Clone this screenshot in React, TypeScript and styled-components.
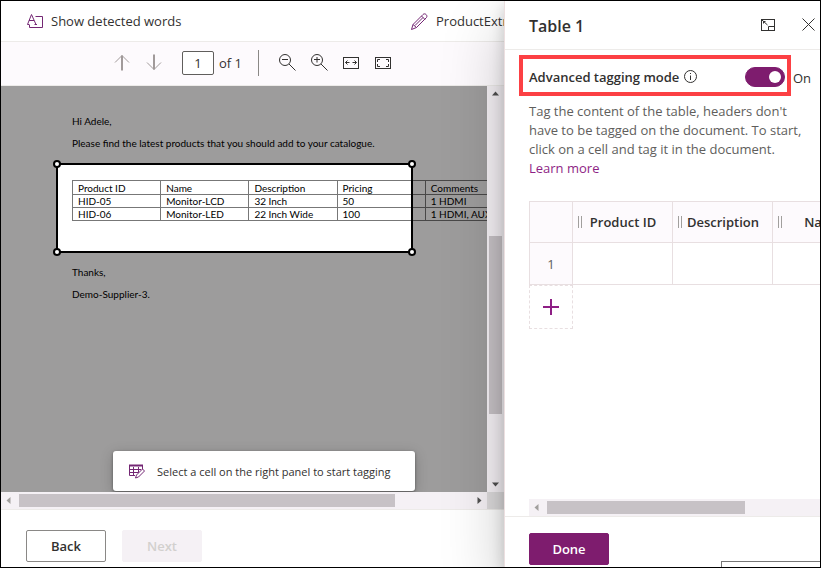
import React, { useState } from "react";
import styled, { createGlobalStyle } from "styled-components";

const Global = createGlobalStyle`
  * { box-sizing: border-box; }
  body { margin: 0; background: #fff; }
  body, button, input { font-family: "Open Sans", "Noto Sans", sans-serif; font-size: 13px; color: #323130; }
  button { cursor: pointer; }
`;

const Frame = styled.div`
  display: grid;
  grid-template-columns: minmax(0, 1fr) 316px;
  grid-template-rows: minmax(0, 1fr);
  height: 100vh;
  border: 1px solid #000;
  overflow: hidden;
  background: #fff;
`;

const Main = styled.main`
  display: flex;
  flex-direction: column;
  min-width: 0;
  min-height: 0;
`;

const CommandBar = styled.header`
  display: grid;
  grid-template-columns: minmax(0, 1fr) 93px;
  justify-items: start;
  flex: none;
  height: 41px;
  padding-left: 26px;
  border-bottom: 1px solid #edebe9;
  overflow: hidden;
`;

const CommandButton = styled.button`
  display: flex;
  align-items: center;
  gap: 8px;
  width: max-content;
  padding: 0;
  border: 0;
  background: none;
  white-space: nowrap;
`;

const Toolbar = styled.div`
  display: flex;
  align-items: center;
  flex: none;
  height: 44px;
  padding: 0 0 2px 112px;
  background: #fdfafd;
  border-bottom: 1px solid #edebe9;
`;

const IconButton = styled.button`
  display: flex;
  align-items: center;
  justify-content: center;
  width: 32px;
  height: 32px;
  padding: 0;
  border: 0;
  background: none;
`;

const ArrowGroup = styled.div`
  display: flex;
  margin-left: -7px;
`;

const PageInput = styled.input`
  width: 32px;
  height: 24px;
  margin-left: 12px;
  padding: 0;
  border: 1px solid #605e5c;
  border-radius: 2px;
  background: #fff;
  text-align: center;
`;

const PageLabel = styled.label`
  display: flex;
  align-items: center;
  gap: 5px;
`;

const Divider = styled.span`
  width: 1px;
  height: 26px;
  margin: 0 12px 0 16px;
  background: #8a8886;
`;

const Viewer = styled.section`
  display: grid;
  grid-template-columns: minmax(0, 1fr) 17px;
  grid-template-rows: minmax(0, 1fr) 17px;
  flex: 1;
  min-height: 0;
  border-bottom: 1px solid #edebe9;
`;

const Page = styled.article`
  position: relative;
  overflow: hidden;
  padding: 24px 0 0 71px;
  background: #fff;
  color: #000;
  font-family: Lato, "Liberation Sans", sans-serif;
  font-size: 10px;
  white-space: nowrap;
`;

const Line = styled.p`
  margin: 0;
  line-height: 22px;
`;

const TableBlock = styled.div`
  position: relative;
  margin: 26px 0 40px;
`;

const DocTable = styled.table`
  table-layout: fixed;
  width: 442px;
  border-collapse: collapse;

  th, td {
    height: 13px;
    padding: 0 0 0 5px;
    border: 1px solid #777;
    font-weight: 400;
    line-height: 12px;
    text-align: left;
  }

  th {
    height: 14px;
  }
`;

const Selection = styled.div`
  position: absolute;
  top: -17px;
  left: -16px;
  width: 357px;
  height: 90px;
  border: 2px solid #000;
  box-shadow: 0 0 0 2000px rgba(3, 0, 0, 0.39);
`;

const Handle = styled.span<{ $x: "left" | "right"; $y: "top" | "bottom" }>`
  position: absolute;
  ${(p) => p.$x}: -5px;
  ${(p) => p.$y}: -5px;
  width: 8px;
  height: 8px;
  border: 2px solid #000;
  border-radius: 50%;
  background: #fff;
`;

const Toast = styled.div`
  position: absolute;
  left: 112px;
  bottom: 1px;
  display: flex;
  align-items: center;
  gap: 12px;
  width: 302px;
  height: 40px;
  padding: 0 16px;
  border-radius: 3px;
  background: #fff;
  color: #323130;
  font-family: "Open Sans", "Noto Sans", sans-serif;
  font-size: 11px;
  box-shadow: 0 3px 14px rgba(0, 0, 0, 0.2), 0 1px 3px rgba(0, 0, 0, 0.4);
`;

const VBar = styled.div`
  display: flex;
  flex-direction: column;
  align-items: center;
  padding: 5px 0;
  background: #f5f1f5;
`;

const HBar = styled.div`
  display: flex;
  align-items: center;
  height: 17px;
  padding: 0 5px;
  background: #f5f1f5;
`;

const Track = styled.div<{ $vertical?: boolean }>`
  display: flex;
  flex-direction: ${(p) => (p.$vertical ? "column" : "row")};
  flex: 1;
  align-self: stretch;
  margin: ${(p) => (p.$vertical ? "8px 2px" : "2px 8px")};
`;

const Before = styled.span<{ $share: number }>`
  flex: ${(p) => p.$share} 1 0;
`;

const Thumb = styled(Before)`
  background: #c7c2c6;
`;

const Corner = styled.div`
  background: #dcdadb;
`;

const Footer = styled.footer`
  display: flex;
  flex: none;
  gap: 16px;
  height: 57px;
  padding: 20px 0 5px 25px;
`;

const Action = styled.button<{ $primary?: boolean }>`
  width: 80px;
  height: 32px;
  padding: 0;
  border: 1px solid ${(p) => (p.$primary ? "#7e1c6e" : "#8a8886")};
  border-radius: 2px;
  background: ${(p) => (p.$primary ? "#7e1c6e" : "#fff")};
  color: ${(p) => (p.$primary ? "#fff" : "#323130")};
  font-weight: 600;

  &:disabled {
    border-color: #f5f1f5;
    background: #f5f1f5;
    color: #d2d0ce;
    cursor: default;
  }
`;

const Panel = styled.aside`
  position: relative;
  display: flex;
  flex-direction: column;
  min-width: 0;
  min-height: 0;
  border-left: 1px solid #ecdfe0;
  background: #fff;
  box-shadow: 0 26px 58px rgba(0, 0, 0, 0.22), 0 5px 14px rgba(0, 0, 0, 0.18);
`;

const PanelHeader = styled.header`
  display: flex;
  align-items: center;
  flex: none;
  height: 49px;
  padding: 2px 5px 0 24px;
  border-bottom: 1px solid #edebe9;
`;

const Title = styled.h2`
  flex: 1;
  margin: 0;
  font-size: 16px;
  font-weight: 600;
`;

const HeaderTools = styled.div`
  display: flex;
  gap: 8px;
  margin: 0 -9px 3px 0;
`;

const ModeRow = styled.div`
  display: flex;
  align-items: center;
  flex: none;
  gap: 2px;
  margin: 5px 0 0 14px;
`;

const Callout = styled.div`
  display: flex;
  align-items: center;
  width: 272px;
  height: 41px;
  padding: 2px 2px 0 6px;
  border: 4px solid #fc4044;
`;

const ModeLabel = styled.label`
  flex: none;
  font-weight: 600;
`;

const InfoButton = styled.button`
  display: flex;
  margin: 0 auto 0 5px;
  padding: 0;
  border: 0;
  background: none;
`;

const Switch = styled.input`
  appearance: none;
  display: flex;
  align-items: center;
  justify-content: flex-start;
  width: 40px;
  height: 20px;
  margin: 0;
  padding: 0 3px;
  border: 1px solid #7e1c6e;
  border-radius: 10px;
  background: #fff;
  cursor: pointer;

  &::before {
    content: "";
    width: 12px;
    height: 12px;
    border-radius: 50%;
    background: #7e1c6e;
  }

  &:checked {
    justify-content: flex-end;
    background: #7e1c6e;
  }

  &:checked::before {
    background: #fff;
  }
`;

const State = styled.span`
  padding-top: 4px;
`;

const Help = styled.p`
  flex: none;
  margin: 6px 8px 0 24px;
  color: #605e5c;
  line-height: 19px;
`;

const HelpLink = styled.a`
  display: block;
  color: #8e1f85;
  text-decoration: none;
`;

const GridArea = styled.div`
  flex: 1;
  min-height: 0;
  margin: 23px 0 0 24px;
  overflow: hidden;
`;

const TagTable = styled.table`
  table-layout: fixed;
  width: 344px;
  border-collapse: collapse;

  th, td {
    height: 42px;
    padding: 0;
    border: 1px solid #e8dfe1;
  }

  thead th {
    height: 41px;
  }

  thead th, tbody th {
    background: #fdfafd;
  }

  tbody th {
    color: #605e5c;
    font-weight: 400;
  }
`;

const HeadCell = styled.div`
  display: flex;
  align-items: center;
  padding: 0 8px 0 5px;
  font-weight: 600;
`;

const HeadText = styled.span`
  flex: 1;
  text-align: center;
`;

const Grip = styled.span`
  width: 4px;
  height: 12px;
  border: solid #a19f9d;
  border-width: 0 1px;
`;

const AddRow = styled.button`
  display: flex;
  align-items: center;
  justify-content: center;
  width: 44px;
  height: 44px;
  padding: 0;
  border: 1px dashed #e8dfe1;
  background: #fff;
`;

const PanelBar = styled(HBar)`
  flex: none;
  margin-left: 24px;
  padding-right: 0;
`;

const PanelFooter = styled.footer`
  flex: none;
  height: 51px;
  padding: 16px 0 0 24px;
  border-top: 1px solid #edebe9;
`;

const Hint = styled.div`
  position: absolute;
  right: -8px;
  bottom: -12px;
  width: 107px;
  height: 18px;
  padding: 2px 4px;
  border: 1px solid #767676;
  background: #fff;
`;

const Svg = ({ w, h, children, color = "#323130" }: { w: number; h: number; children: React.ReactNode; color?: string }) => (
  <svg width={w} height={h} viewBox={`0 0 ${w} ${h}`} fill="none" stroke={color} strokeWidth="1" aria-hidden="true">
    {children}
  </svg>
);

const WordsIcon = () => (
  <Svg w={16} h={14} color="#742774">
    <path d="M.5 10.500L4.500 .5l4.500 10M2 6.500h5M8.500 2.500h7v11H2.500v-2.500M.5 10.500h2M7.500 10.500h2.500" />
  </Svg>
);

const PencilIcon = () => (
  <Svg w={17} h={17} color="#742774">
    <path d="M.5 16.500l1.500-5L12 1.500c2-2 5 1 3.500 3L5.500 14.500zM2 11.500l3.500 3M10.500 3l3.500 3.500M4 12.500l8-8" />
  </Svg>
);

const ArrowIcon = ({ down }: { down?: boolean }) => (
  <Svg w={16} h={17} color="#a19a9a">
    {down ? (
      <>
        <path d="M8 .5v15" strokeWidth="2" />
        <path d="M1 8.500l7 7 7-7" />
      </>
    ) : (
      <>
        <path d="M8 1.500v15" strokeWidth="2" />
        <path d="M1 8.500l7-7 7 7" />
      </>
    )}
  </Svg>
);

const ZoomIcon = ({ plus }: { plus?: boolean }) => (
  <Svg w={17} h={17}>
    <circle cx="6" cy="6" r="5.500" />
    <path d="M10 10l6.500 6.500M3 5.500h6" />
    {plus && <path d="M6 3v5.500" />}
  </Svg>
);

const FitWidthIcon = () => (
  <Svg w={16} h={12}>
    <rect x=".5" y=".5" width="15" height="11" />
    <path d="M2.500 5.500h4M9.500 5.500h4M4.500 3.500l-2 2 2 2M11.500 3.500l2 2-2 2" />
  </Svg>
);

const FitPageIcon = () => (
  <Svg w={16} h={12}>
    <rect x=".5" y=".5" width="15" height="11" />
    <path d="M2.500 5V2.500H5M11 2.500h2.500V5M2.500 7v2.500H5M11 9.500h2.500V7" />
  </Svg>
);

const TagIcon = () => (
  <Svg w={16} h={15} color="#742774">
    <path d="M0 1.500h14" strokeWidth="2" />
    <path d="M.5 1v10.500H6M13.500 2v3M0 5.500h12M0 8.500h9M4.500 3v8.500M9.500 3v6" />
    <path d="M6.500 14l1-3 6-6 2 2-6 6z" fill="#fff" />
  </Svg>
);

const RestoreIcon = () => (
  <Svg w={14} h={12}>
    <rect x=".5" y=".5" width="13" height="11" />
    <path d="M1 1l5.500 5M2.500 4.500v-2h2M7.500 11.500v-4h6" />
  </Svg>
);

const CloseIcon = () => (
  <Svg w={13} h={13}>
    <path d="M.5 .5l12 12M12.500 .5l-12 12" />
  </Svg>
);

const InfoIcon = () => (
  <Svg w={13} h={13}>
    <circle cx="6.500" cy="6.500" r="6" />
    <path d="M6.500 5.500v4.500M6.500 3v1" />
  </Svg>
);

const PlusIcon = () => (
  <Svg w={16} h={16} color="#8e1f85">
    <path d="M8 0v16M0 8h16" strokeWidth="2" />
  </Svg>
);

const tips = {
  up: "M0 4.500L3.500 .5 7 4.500z",
  down: "M0 .5h7L3.500 4.500z",
  left: "M4.500 0v7L.5 3.500z",
  right: "M.5 0v7l4-3.500z",
};

const Tip = ({ dir, color = "#505050" }: { dir: keyof typeof tips; color?: string }) => {
  const upright = dir === "up" || dir === "down";
  return (
    <svg width={upright ? 7 : 5} height={upright ? 5 : 7} fill={color} aria-hidden="true">
      <path d={tips[dir]} />
    </svg>
  );
};

const docHead = ["Product ID", "Name", "Description", "Pricing", "Comments"];
const docRows = [
  ["HID-05", "Monitor-LCD", "32 Inch", "50", "1 HDMI"],
  ["HID-06", "Monitor-LED", "22 Inch Wide", "100", "1 HDMI, AUX"],
];
const tagColumns = ["Product ID", "Description", "Name"];

export default function App() {
  const [advanced, setAdvanced] = useState(true);
  const [page, setPage] = useState("1");

  return (
    <>
      <Global />
      <Frame>
        <Main>
          <CommandBar>
            <CommandButton><WordsIcon />Show detected words</CommandButton>
            <CommandButton><PencilIcon />ProductExtraction</CommandButton>
          </CommandBar>
          <Toolbar>
            <ArrowGroup>
              <IconButton aria-label="Previous page"><ArrowIcon /></IconButton>
              <IconButton aria-label="Next page"><ArrowIcon down /></IconButton>
            </ArrowGroup>
            <PageLabel>
              <PageInput value={page} onChange={(e) => setPage(e.target.value)} aria-label="Page" />
              of 1
            </PageLabel>
            <Divider />
            <IconButton aria-label="Zoom out"><ZoomIcon /></IconButton>
            <IconButton aria-label="Zoom in"><ZoomIcon plus /></IconButton>
            <IconButton aria-label="Fit to width"><FitWidthIcon /></IconButton>
            <IconButton aria-label="Fit to page"><FitPageIcon /></IconButton>
          </Toolbar>
          <Viewer>
            <Page>
              <Line>Hi Adele,</Line>
              <Line>Please find the latest products that you should add to your catalogue.</Line>
              <TableBlock>
                <DocTable>
                  <thead>
                    <tr>{docHead.map((c) => <th key={c}>{c}</th>)}</tr>
                  </thead>
                  <tbody>
                    {docRows.map((r) => (
                      <tr key={r[0]}>{r.map((c) => <td key={c}>{c}</td>)}</tr>
                    ))}
                  </tbody>
                </DocTable>
                <Selection>
                  <Handle $x="left" $y="top" />
                  <Handle $x="right" $y="top" />
                  <Handle $x="left" $y="bottom" />
                  <Handle $x="right" $y="bottom" />
                </Selection>
              </TableBlock>
              <Line>Thanks,</Line>
              <Line>Demo-Supplier-3.</Line>
              <Toast role="status"><TagIcon />Select a cell on the right panel to start tagging</Toast>
            </Page>
            <VBar>
              <Tip dir="up" />
              <Track $vertical>
                <Before $share={133} />
                <Thumb $share={179} />
                <Before $share={60} />
              </Track>
              <Tip dir="down" />
            </VBar>
            <HBar>
              <Tip dir="left" color="#a19f9d" />
              <Track>
                <Thumb $share={376} />
                <Before $share={74} />
              </Track>
              <Tip dir="right" />
            </HBar>
            <Corner />
          </Viewer>
          <Footer>
            <Action>Back</Action>
            <Action disabled>Next</Action>
          </Footer>
        </Main>
        <Panel>
          <PanelHeader>
            <Title>Table 1</Title>
            <HeaderTools>
              <IconButton aria-label="Restore panel"><RestoreIcon /></IconButton>
              <IconButton aria-label="Close"><CloseIcon /></IconButton>
            </HeaderTools>
          </PanelHeader>
          <ModeRow>
            <Callout>
              <ModeLabel htmlFor="mode">Advanced tagging mode</ModeLabel>
              <InfoButton aria-label="About advanced tagging mode"><InfoIcon /></InfoButton>
              <Switch id="mode" type="checkbox" role="switch" checked={advanced} onChange={(e) => setAdvanced(e.target.checked)} />
            </Callout>
            <State>{advanced ? "On" : "Off"}</State>
          </ModeRow>
          <Help>
            Tag the content of the table, headers don't have to be tagged on the document. To start, click on a cell and tag it in the document.
            <HelpLink href="#learn">Learn more</HelpLink>
          </Help>
          <GridArea>
            <TagTable>
              <colgroup>
                <col width="43" />
                {tagColumns.map((c) => <col key={c} width="100" />)}
              </colgroup>
              <thead>
                <tr>
                  <th />
                  {tagColumns.map((c) => (
                    <th key={c}><HeadCell><Grip /><HeadText>{c}</HeadText></HeadCell></th>
                  ))}
                </tr>
              </thead>
              <tbody>
                <tr>
                  <th>1</th>
                  {tagColumns.map((c) => <td key={c} />)}
                </tr>
              </tbody>
            </TagTable>
            <AddRow aria-label="Add row"><PlusIcon /></AddRow>
          </GridArea>
          <PanelBar>
            <Tip dir="left" color="#a19f9d" />
            <Track>
              <Thumb $share={199} />
              <Before $share={67} />
            </Track>
          </PanelBar>
          <PanelFooter>
            <Action $primary>Done</Action>
          </PanelFooter>
          <Hint />
        </Panel>
      </Frame>
    </>
  );
}
